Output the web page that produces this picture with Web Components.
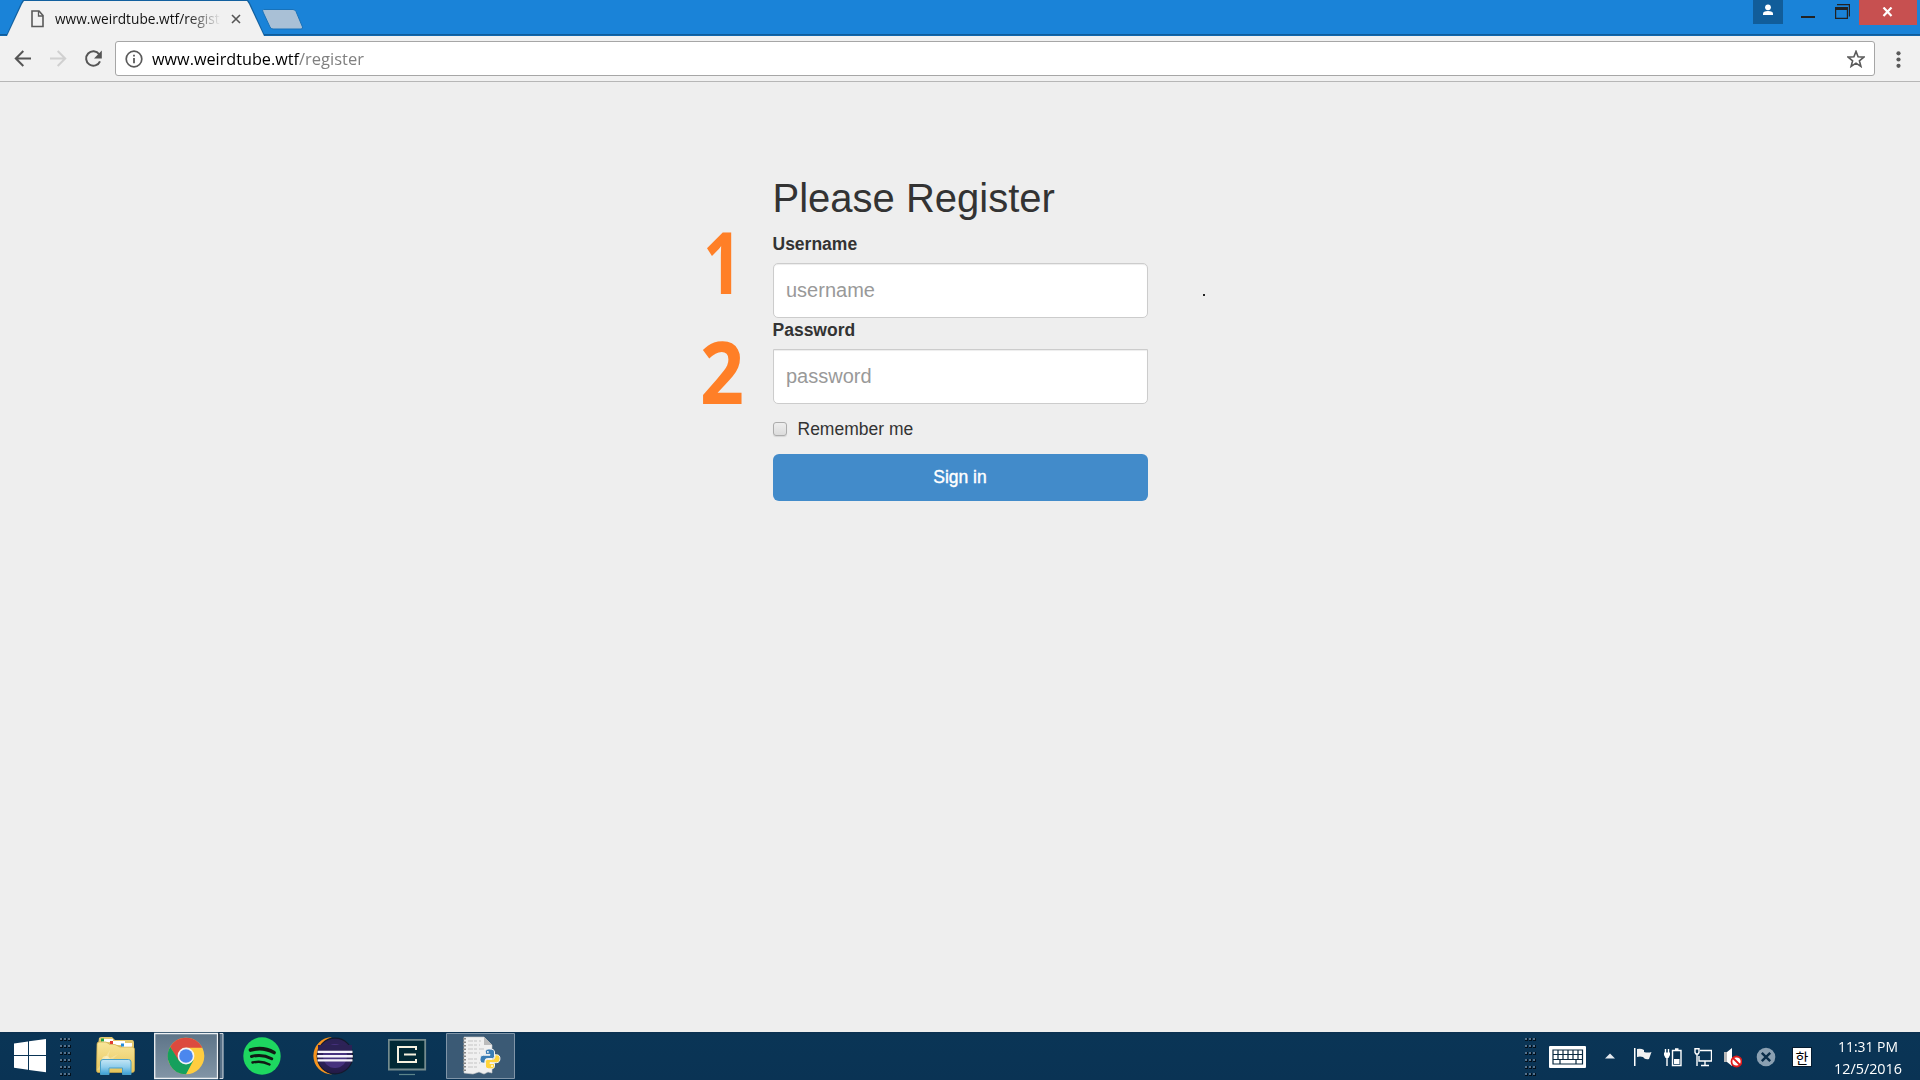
<!DOCTYPE html>
<html lang="en">
<head>
<meta charset="utf-8">
<title>www.weirdtube.wtf/register</title>
<style>
html,body{margin:0;height:100%;overflow:hidden}
body{font-family:"Liberation Sans",Arial,sans-serif;background:#eee}
</style>
</head>
<body>
<desk-screen></desk-screen>
<script>
const define = (name, html, after) => customElements.define(name, class extends HTMLElement {
  connectedCallback() {
    if (this.shadowRoot) return;
    const t = document.createElement('template');
    t.innerHTML = html;
    this.attachShadow({ mode: 'open' }).appendChild(t.content.cloneNode(true));
    if (after) after(this, this.shadowRoot);
  }
});

// Text squeezed or stretched horizontally to a given width.
define('fit-text', `<style>
:host{display:inline-block;white-space:nowrap;font-family:"Open Sans","Noto Sans",sans-serif}
span{display:inline-block;transform-origin:0 50%}
</style><span><slot></slot></span>`, (el, root) => {
  const s = root.querySelector('span'), w = +el.getAttribute('width');
  const n = s.getBoundingClientRect().width;
  if (n) s.style.transform = `scaleX(${w / n})`;
  el.style.width = w + 'px';
});

define('tab-strip', `<style>
:host{display:flex;height:36px;background:linear-gradient(#1a83d8 34px,#115c99 34px,#115c99 35px,#1167ad 35px);align-items:flex-start}
.tab{width:257px;height:36px;margin-left:7px;display:flex;box-sizing:border-box;padding:0 0 0 24px;
 background:#f1f1f1;clip-path:polygon(0 100%,15px 4px,17px 1px,240px 1px,242px 4px,257px 100%)}
.wrap{background:#12609f;clip-path:polygon(6px 100%,21px 3px,23px 0,248px 0,250px 3px,265px 100%);width:265px}
.file{margin-top:10px;flex:none}
.title{width:165px;height:36px;margin-left:11px;overflow:hidden;line-height:37px;font-size:14.5px;color:#111;
 -webkit-mask:linear-gradient(90deg,#000 132px,transparent 166px);flex:none}
.x{margin:14px 0 0 11px;flex:none}
.new{margin:9px 0 0 -3px}
.spacer{flex:1}
.user{margin-right:18px}.min{margin:16px 20px 0 0}.res{margin:4px 9px 0 0}
.close{width:58px;height:25px;background:#c75050;margin-right:3px;display:flex;justify-content:center}
</style>
<div class="wrap"><div class="tab">
<svg class="file" width="13" height="18"><path d="M1 1H8L12 5.5V16.5H1Z" fill="none" stroke="#5a5a5a" stroke-width="1.6"/><path d="M7.5 1V6H12" fill="none" stroke="#5a5a5a" stroke-width="1.3"/></svg>
<div class="title"><fit-text width="178">www.weirdtube.wtf/register</fit-text></div>
<svg class="x" width="10" height="10"><path d="M1 1L9 9M9 1L1 9" stroke="#555" stroke-width="1.6"/></svg>
</div></div>
<svg class="new" width="42" height="21"><path d="M1.5 .5H31Q33 .5 34 2.5L40.5 18Q41 20 39 20H11Q9 20 8 18L1 3Q0 .5 1.5 .5Z" fill="#a9c0d6" stroke="#1872ba"/></svg>
<div class="spacer"></div>
<svg class="user" width="30" height="24"><path d="M0 0H30V24H0Z" fill="#115d9a"/><circle cx="15" cy="7.3" r="2.9" fill="#fff"/><path d="M10 15V13.5Q10 11 15 11T20 13.500V15Z" fill="#fff"/></svg>
<svg class="min" width="14" height="2"><path d="M0 0H14V2H0Z" fill="#222"/></svg>
<svg class="res" width="15" height="15"><path d="M0 3H13V15H0ZM1.200 6V13.800H11.800V6Z" fill="#222" fill-rule="evenodd"/><path d="M2 .6H14.400V12.500" fill="none" stroke="#222" stroke-width="1.200"/></svg>
<div class="close"><svg width="12" height="10" style="margin-top:7px"><path d="M1.5 .5L9.500 8.900M9.500 .5L1.500 8.900" stroke="#fff" stroke-width="2.200"/></svg></div>`);

define('address-bar', `<style>
:host{display:flex;height:46px;box-sizing:border-box;background:#f1f1f1;border-bottom:1px solid #b6b6b6;align-items:flex-start}
svg{flex:none}
.box{width:1760px;height:35px;box-sizing:border-box;margin:5px 0 0 0;border:1px solid #a6a6a6;border-radius:3px;background:#fff;display:flex;align-items:flex-start}
.url{font-size:17px;line-height:33px;margin-left:9px;display:flex}
.info{margin:8px 0 0 9px}.star{margin:8px 9px 0 auto}
.path{color:#808080}
</style>
<svg width="115" height="45" fill="none" stroke="#555" stroke-width="2">
<path d="M31 22.5H16M23.3 15L15.8 22.5L23.3 30"/><path d="M50 22.5H65M57.7 15L65.2 22.5L57.7 30" stroke="#d0d0d0"/>
<path d="M99.2 18.3A7.2 7.2 0 1 0 100 25.3"/><path d="M101.8 14.5V22.5H94Z" fill="#555" stroke="none"/></svg>
<div class="box">
<svg class="info" width="18" height="18"><circle cx="9" cy="9" r="7.8" fill="none" stroke="#5a5a5a" stroke-width="1.7"/><path d="M8.1 8H9.9V13.2H8.1ZM8.1 4.8H9.9V6.6H8.1Z" fill="#5a5a5a"/></svg>
<div class="url"><fit-text width="147">www.weirdtube.wtf</fit-text><fit-text class="path" width="65">/register</fit-text></div>
<svg class="star" width="18" height="18"><path d="M9 1.4L11.1 6.8L16.9 7.1L12.4 10.8L13.9 16.4L9 13.2L4.1 16.4L5.6 10.8L1.1 7.1L6.9 6.8Z" fill="none" stroke="#5a5a5a" stroke-width="1.6"/></svg>
</div>
<svg width="45" height="45" fill="#5a5a5a"><circle cx="23.5" cy="17.3" r="2.1"/><circle cx="23.5" cy="23.5" r="2.1"/><circle cx="23.5" cy="29.8" r="2.1"/></svg>`);

define('form-field', `<style>
:host{display:block}
label{display:block;font-weight:700;font-size:17.5px;line-height:25px;color:#333;height:31px}
input{display:block;width:375px;height:55px;box-sizing:border-box;border:1px solid #ccc;border-radius:var(--r,5px);
 padding:0 12.5px;font:20px "Liberation Sans",Arial,sans-serif;box-shadow:inset 0 1px 1px rgba(0,0,0,.075);outline:0;background:#fff}
input::placeholder{color:#999;opacity:1}
</style><label><slot></slot></label><input>`, (el, root) => {
  root.querySelector('input').placeholder = el.getAttribute('hint');
});

define('register-form', `<style>
:host{display:block;width:375px;margin:0 auto;color:#333}
h2{margin:0;font-weight:400;font-size:40px;line-height:44px;white-space:nowrap}
.first{margin-top:12px}.second{--r:0 0 5px 5px}
.check{display:flex;align-items:center;height:25px;margin-top:13px;font-size:17.5px;gap:11px}
i{width:14px;height:14px;box-sizing:border-box;border:1px solid #acacac;border-radius:3px;background:linear-gradient(#eee,#dcdcdc);box-shadow:0 1px 1px rgba(0,0,0,.1);margin-top:-1px}
button{display:block;margin:12px 0 0;width:375px;height:47px;border:0;border-radius:6px;background:#428bca;color:#fff;font:17.5px "Liberation Sans",Arial,sans-serif;-webkit-text-stroke:.4px #fff;padding:0}
</style>
<h2>Please Register</h2>
<form-field class="first" hint="username">Username</form-field>
<form-field class="second" hint="password">Password</form-field>
<div class="check"><i></i><span>Remember me</span></div>
<button>Sign in</button>`);

// Free-floating annotation marks lie over the page.
define('page-view', `<style>
:host{display:block;height:950px;background:#eee;position:relative;padding-top:94px;box-sizing:border-box}
.n{position:absolute;color:#ff7f27;font-weight:700;font-size:85.500px;line-height:100px;font-family:"Open Sans",sans-serif}
.one{left:703px;top:129px}.two{left:700px;top:239px}
.dot{position:absolute;left:1203px;top:212px;width:2px;height:2px;background:#222}
</style><register-form></register-form>
<fit-text class="n one" width="39">1</fit-text><fit-text class="n two" width="44">2</fit-text><div class="dot"></div>`);

define('task-grip', `<style>:host{display:block;width:12px;height:48px}svg{display:block}</style><svg width="12" height="48"></svg>`, (el, root) => {
  let s = '';
  for (let r = 0; r < 6; r++) for (let c = 0; c < 3; c++)
    s += `<path d="M${c*4} ${6+r*7}h3v3h-3z" fill="#02101d"/><path d="M${c*4} ${6+r*7}h2v2h-2z" fill="#55718a"/>`;
  root.querySelector('svg').innerHTML = s;
});

define('task-bar', `<style>
:host{display:flex;height:48px;background:linear-gradient(#0b3050,#0a3556 3px,#0a3354);color:#fff}
svg{display:block;flex:none}
.clock{width:80px;margin-left:17px;display:flex;flex-direction:column;align-items:center;font-size:15px;line-height:22px;padding-top:3px;height:44px}
.han{width:18px;height:18px;margin:16px 0 0 17px;background:#fff;color:#000;font:14px/18px "Noto Sans CJK KR",sans-serif;text-align:center;box-shadow:0 0 0 1px #061c30}
</style>
<svg width="32" height="48" style="margin-left:14px" fill="#fff"><path d="M0 11.5L14 9.5V23H0ZM15 9.3L32 7V23H15ZM0 24H14V37.8L0 35.7ZM15 24H32V40.3L15 38Z"/></svg>
<task-grip style="margin-left:14px"></task-grip>
<svg width="39" height="48" style="margin-left:24px">
<defs><linearGradient id="f" x2="0" y2="1"><stop stop-color="#f9e69a"/><stop offset="1" stop-color="#e6c55c"/></linearGradient><linearGradient id="b" x2="0" y2="1"><stop stop-color="#c4e6f5"/><stop offset=".5" stop-color="#8fcdec"/><stop offset="1" stop-color="#3b9fd4"/></linearGradient></defs>
<path d="M2 13L3 6Q4 5 6 5H16L19 8H36Q38 8 38 11V40H2Z" fill="#e4c970"/>
<path d="M6 7H17V10H6ZM14 9H29V13H14ZM26 11H36V15H26Z" fill="#fff"/><path d="M5 6.5H8V9.5H5Z" fill="#20a344"/><path d="M14 9H17V12H14Z" fill="#e23c2f"/>
<path d="M1 12Q1 10 3 10H10L14 12.5H19L24 15H36Q38.5 15 38.5 17V38Q38.5 40.5 36 40.5H2Q.5 40.5 .5 38Z" fill="url(#f)" stroke="#cda948" stroke-width=".7"/><path d="M27 11.500H35V14.300H27Z" fill="#fff"/><path d="M25 11.500H28V14.500H25Z" fill="#258ddb"/>
<path d="M1 38L14 18L12 27L22 22L14 30L22 36Z" fill="#fff9d8" opacity=".3"/><circle cx="10" cy="28" r="4" fill="#fffbe4" opacity=".5"/>
<path d="M4.500 42.500V30Q4.500 27.500 7 27.500H32.500Q35 27.500 35 30V42.500H26.500V36H13V42.500Z" fill="url(#b)" stroke="#4aa0c8"/></svg>
<svg width="70" height="48" style="margin-left:19px">
<defs><linearGradient id="c" x2="0" y2="1"><stop stop-color="#5d7488"/><stop offset="1" stop-color="#8295a6"/></linearGradient></defs>
<path d="M64.500 1.500H69V46.500H64.500" fill="#577087" stroke="#d5dbe1"/><path d="M64.800 1V47" stroke="#07192a" stroke-width="1.400"/>
<path d="M.7 1.500H63.500V46.500H.7Z" fill="url(#c)" stroke="#eef1f4" stroke-width="1.300"/>
<circle cx="32" cy="24" r="18.300" fill="#ffcd40"/><path d="M16.150 14.850A18.300 18.300 0 0 1 47.850 14.850L48 15.700H32L24 28.500Z" fill="#dc4a3f"/>
<path d="M16.150 14.850A18.300 18.300 0 0 0 32 42.300L39.500 28.300L32 32L24.800 28.500Z" fill="#15a05d"/>
<circle cx="32" cy="24" r="8.400" fill="#f3f5f7"/><circle cx="32" cy="24" r="6.800" fill="#4b87ee"/></svg>
<svg width="38" height="48" style="margin-left:18.500px" fill="none" stroke="#111a14" stroke-linecap="round"><circle cx="19" cy="24" r="18.700" fill="#1ed760" stroke="none"/><path d="M7.500 18Q20 14.500 31 20.500" stroke-width="3.700"/><path d="M8.500 24.500Q19 21.500 28.700 26.700" stroke-width="3"/><path d="M9.500 30.500Q18.500 28.200 26.500 32.500" stroke-width="2.400"/></svg>
<svg width="42" height="48" style="margin-left:31.500px"><defs><linearGradient id="e" x2="0" y2="1"><stop stop-color="#2c2255"/><stop offset=".6" stop-color="#31235f"/><stop offset="1" stop-color="#221a45"/></linearGradient></defs>
<path d="M20 5.200A18.500 18.500 0 0 0 20 42.500Q7 37 7 24T20 5.200Z" fill="#f7941e"/><circle cx="23" cy="24" r="17.800" fill="url(#e)" stroke="#151a2d" stroke-width="1.200"/><circle cx="23" cy="24" r="12" fill="#46327e"/><path d="M6 13H40V19H6Z" fill="#2c2255"/><path d="M5.500 18.800H40.500V21H5.500ZM5.200 23H40.800V25.400H5.200ZM5.500 27.300H40.500V29.400H5.500Z" fill="#f5f3fa"/></svg>
<svg width="39" height="48" style="margin-left:34px" fill="none"><path d="M.8 7.800H37.200V37.500H.8Z" fill="#022a35" stroke="#748b8e" stroke-width="1.800"/><path d="M28 18V15H10V30H28V27M16 22.500H28" stroke="#f6f2df" stroke-width="2"/><path d="M11 42.500H27" stroke="#5c858b" stroke-width="1.200"/></svg>
<svg width="69" height="48" style="margin-left:19px"><path d="M.5 1.500H68.500V46.500H.5Z" fill="#3b5a75" stroke="#8095a8"/>
<path d="M18 5H38L46 13V41L42 40L38 42L33 40L27 42L18 41Z" fill="#f0f0f0" stroke="#c8c8c8" stroke-width=".6"/><path d="M38 5V13H46Z" fill="#bbb"/>
<path d="M18.500 6V41" stroke="#888" stroke-width="3" stroke-dasharray="1.500 2"/><path d="M22 9H35M22 13H34M22 17H38M22 21H34M22 27H33M22 31H34M22 35H32" stroke="#c4c4c4" stroke-dasharray="5 1 3 2"/>
<g transform="translate(34 17) scale(.83)"><g stroke="#f4f4f4" stroke-width="1.200"><path d="M11.800 0C7 0 6.500 2 6.500 3.500V6.500H12V7.500H4C1 7.500 0 10 0 12.500S1 17 4 17H6V14.500Q6 11.500 9 11.500H15Q17.500 11.500 17.500 9V3.500C17.500 1 15 0 11.800 0Z" fill="#3b7db5"/><path d="M12.200 24C17 24 17.500 22 17.500 20.500V17.500H12V16.500H20C23 16.500 24 14 24 11.500S23 7 20 7H18V9.500Q18 12.500 15 12.500H9Q6.500 12.500 6.500 15V20.500C6.500 23 9 24 12.200 24Z" fill="#ffd43b"/></g><circle cx="9.500" cy="3.500" r="1.100" fill="#fff"/><circle cx="14.500" cy="20.500" r="1.100" fill="#fff"/></g></svg>
<div style="flex:1"></div>
<task-grip></task-grip>
<svg width="38" height="48" style="margin-left:12px"><rect y="14" width="37" height="22" rx="1" fill="#fff"/><path d="M4 18H33.500V32H4ZM4 22.500H33.500M4 27.500H33.500M9 18V27.500M14 18V27.500M19 18V27.500M24 18V27.500M29 18V27.500M11 27.500V32M27 27.500V32" fill="none" stroke="#0a2a40" stroke-width="1.200"/></svg>
<svg width="10" height="48" style="margin-left:18px"><path d="M0 26.500L5 21.500L10 26.500Z" fill="#e5eaf0"/></svg>
<svg width="18" height="48" style="margin-left:18.500px"><path d="M0 16H1.500V34H0Z" fill="#fff"/><path d="M3 17Q7 16 10 18V20Q14 21 17.500 20L15 27Q11 28 9 25Q6 24 3 25Z" fill="#f1f1f1"/></svg>
<svg width="18" height="48" style="margin-left:12.500px" fill="none" stroke="#fff"><path d="M1.500 17V21M4.500 17V21M3 26V34" stroke-width="1.400"/><path d="M0 20.500H6V23L4.500 26H1.500L0 23Z" fill="#fff" stroke="none"/><path d="M8.500 18.500H17V33.500H8.500ZM11 17H14.500" stroke-width="1.400"/><path d="M10 27H15.500V32H10Z" fill="#fff" stroke="none"/></svg>
<svg width="18" height="48" style="margin-left:12px" fill="none" stroke="#fff" stroke-width="1.400"><path d="M6 18.500H17.500V29H5V24M11 29V33M7 33.500H15M3 22V34"/><path d="M1 16.700H5V20.500L4 22H2L1 20.500Z"/></svg>
<svg width="18" height="48" style="margin-left:12px"><path d="M0 20H3V30H0Z" fill="#b8b8b8"/><path d="M3 20L8 16V34L3 30Z" fill="#fff"/><circle cx="12.500" cy="29.500" r="5" fill="#fff" stroke="#e01b1b" stroke-width="1.800"/><path d="M9 26L16 33" stroke="#e01b1b" stroke-width="1.800"/></svg>
<svg width="20" height="48" style="margin-left:14px"><circle cx="10" cy="25" r="9.300" fill="#8ba0b2"/><path d="M5.800 20.800L14.200 29.200M14.200 20.800L5.800 29.200" stroke="#0b2d4a" stroke-width="2.400"/></svg>
<div class="han">한</div>
<div class="clock"><fit-text width="60">11:31 PM</fit-text><fit-text width="68">12/5/2016</fit-text></div>
<div style="width:12px"></div>`);

define('desk-screen', `<style>:host{display:block;width:1920px;height:1080px;overflow:hidden}</style>
<tab-strip></tab-strip><address-bar></address-bar><page-view></page-view><task-bar></task-bar>`);
</script>
</body>
</html>
